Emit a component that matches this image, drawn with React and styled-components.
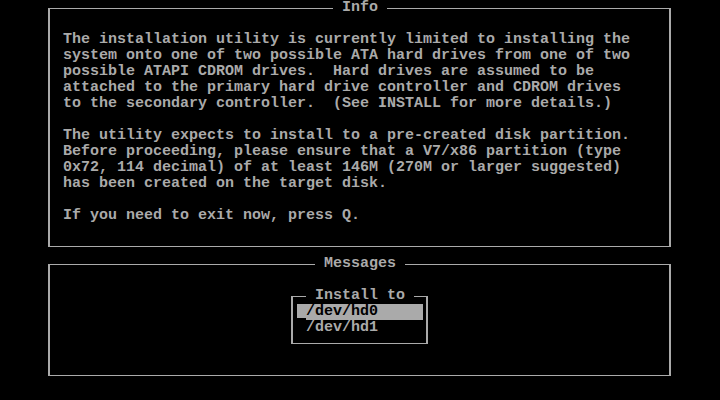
import React from 'react';
import styled, { createGlobalStyle } from 'styled-components';

const GlobalStyle = createGlobalStyle`
    html, body {
        margin: 0;
        padding: 0;
        background: #000;
    }
`;

const Screen = styled.div`
    width: 720px;
    height: 400px;
    background: #000;
    color: #aaaaaa;
    font-family: "Liberation Mono", "DejaVu Sans Mono", monospace;
    font-size: 15px;
    font-weight: bold;
    line-height: 16px;
    display: flex;
    flex-direction: column;
    overflow: hidden;
`;

const Frame = styled.fieldset`
    box-sizing: border-box;
    min-inline-size: 0;
    margin: ${(p) => p.$margin || '0'};
    width: ${(p) => p.$width};
    height: ${(p) => p.$height};
    padding: 0;
    border-style: solid;
    border-color: #aaaaaa;
    border-width: 1px 2px;
`;

const Title = styled.legend`
    padding: 0;
    margin-left: ${(p) => p.$offset}px;
    line-height: 16px;
    white-space: pre;
`;

const Body = styled.div`
    padding: 16px 13px 0;
`;

const Paragraph = styled.p`
    margin: 0 0 16px;
    white-space: pre;
`;

const MessageArea = styled.div`
    padding-top: 16px;
    display: flex;
    justify-content: center;
`;

const OptionList = styled.div`
    padding: 0 3px 0 4px;
    display: flex;
    flex-direction: column;
`;

const Option = styled.div`
    height: 16px;
    white-space: pre;
    display: flex;
    background: ${(p) => (p.$selected ? '#aaaaaa' : 'transparent')};
    color: ${(p) => (p.$selected ? '#000' : '#aaaaaa')};
`;

const Cursor = styled.span`
    box-sizing: border-box;
    display: inline-block;
    width: 9px;
    height: 16px;
    border-bottom: ${(p) => (p.$on ? '2px solid currentColor' : 'none')};
`;

const info = [
    [
        'The installation utility is currently limited to installing the',
        'system onto one of two possible ATA hard drives from one of two',
        'possible ATAPI CDROM drives.  Hard drives are assumed to be',
        'attached to the primary hard drive controller and CDROM drives',
        'to the secondary controller.  (See INSTALL for more details.)',
    ],
    [
        'The utility expects to install to a pre-created disk partition.',
        'Before proceeding, please ensure that a V7/x86 partition (type',
        '0x72, 114 decimal) of at least 146M (270M or larger suggested)',
        'has been created on the target disk.',
    ],
    ['If you need to exit now, press Q.'],
];

const drives = ['/dev/hd0', '/dev/hd1'];

export default function App() {
    return (
        <>
            <GlobalStyle />
            <Screen>
                <Frame $margin="0 49px 0 48px" $height="247px">
                    <Title $offset={283}>{' Info '}</Title>
                    <Body>
                        {info.map((lines, i) => (
                            <Paragraph key={i}>{lines.join('\n')}</Paragraph>
                        ))}
                    </Body>
                </Frame>
                <Frame $margin="9px 49px 0 48px" $height="120px">
                    <Title $offset={265}>{' Messages '}</Title>
                    <MessageArea>
                        <Frame $width="137px" $height="56px">
                            <Title $offset={13}>{' Install to '}</Title>
                            <OptionList>
                                {drives.map((d, i) => (
                                    <Option key={d} $selected={i === 0}>
                                        <Cursor $on={i === 0} />
                                        {d}
                                    </Option>
                                ))}
                            </OptionList>
                        </Frame>
                    </MessageArea>
                </Frame>
            </Screen>
        </>
    );
}
